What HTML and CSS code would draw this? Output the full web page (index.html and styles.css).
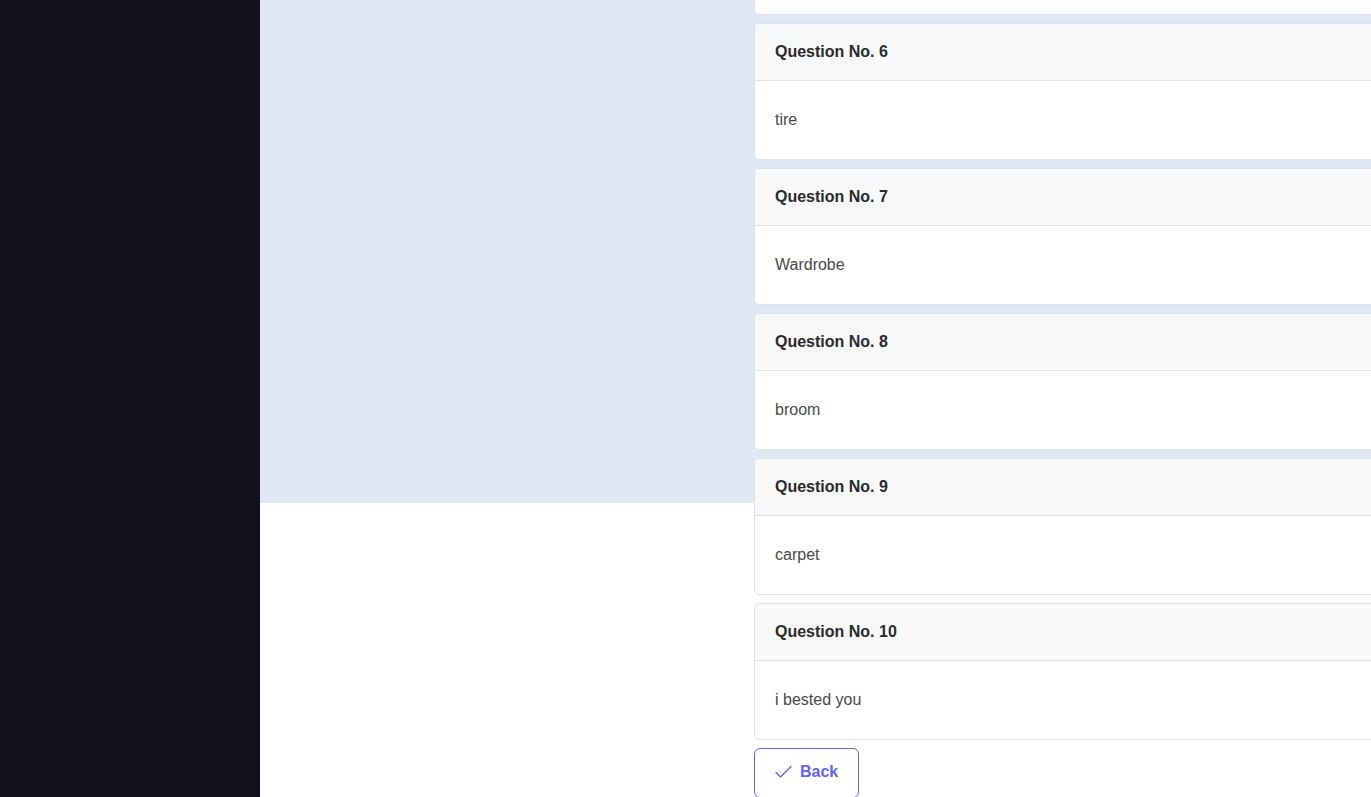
FILE: index.html
```html
<!DOCTYPE html>
<html lang="en">
<head>
<meta charset="utf-8">
<title>Answers</title>
<link rel="stylesheet" href="styles.css">
</head>
<body>
<div class="app">
  <aside class="sidebar"></aside>
  <main class="main">
    <div class="column">
      <div class="card-tail"></div>
      <div class="card">
        <div class="card-header">Question No. 6</div>
        <div class="card-body">tire</div>
      </div>
      <div class="card">
        <div class="card-header">Question No. 7</div>
        <div class="card-body">Wardrobe</div>
      </div>
      <div class="card">
        <div class="card-header">Question No. 8</div>
        <div class="card-body">broom</div>
      </div>
      <div class="card">
        <div class="card-header">Question No. 9</div>
        <div class="card-body">carpet</div>
      </div>
      <div class="card">
        <div class="card-header">Question No. 10</div>
        <div class="card-body">i bested you</div>
      </div>
      <button class="btn-back" type="button">
        <svg width="17" height="14" viewBox="0 0 17 14" fill="none" stroke="currentColor" stroke-width="1.4" stroke-linecap="round" stroke-linejoin="round"><path d="M1 7.5 L5.5 12 L16 1.5"/></svg>
        <span>Back</span>
      </button>
    </div>
  </main>
</div>
</body>
</html>
```
FILE: styles.css
```css
* { box-sizing: border-box; }
html, body { margin: 0; padding: 0; height: 100%; overflow: hidden; }
body {
  font-family: "Liberation Sans", Arial, sans-serif;
  font-size: 16px;
  line-height: 24px;
  color: #2b2b2b;
  background: #fff;
}
.app {
  display: flex;
  height: 797px;
}
.sidebar {
  flex: 0 0 260px;
  background: #11121d;
}
.main {
  flex: 1;
  background: linear-gradient(#e1e8f5 0, #e1e8f5 503px, #ffffff 503px);
  padding-left: 494px;
  overflow: hidden;
}
.column {
  width: 800px;
  display: flex;
  flex-direction: column;
  align-items: flex-start;
}
.card-tail {
  width: 100%;
  height: 15px;
  background: #fff;
  border: 1px solid #dee2e6;
  border-top: none;
  border-radius: 0 0 5px 5px;
  margin-bottom: 8px;
}
.card {
  width: 100%;
  background: #fff;
  border: 1px solid #dee2e6;
  border-radius: 5px;
  margin-bottom: 8px;
  overflow: hidden;
}
.card-header {
  background: #f7f8fa;
  border-bottom: 1px solid #dee2e6;
  padding: 16px 20px;
  font-weight: 700;
  color: #2b2b2b;
}
.card-body {
  padding: 27px 20px;
  color: #4a4a4a;
}
.btn-back {
  display: flex;
  align-items: center;
  gap: 8px;
  height: 50px;
  padding: 0 20px 2px 20px;
  border: 1px solid #6366f1;
  border-radius: 6px;
  background: #fff;
  color: #6366f1;
  font-family: "Liberation Sans", Arial, sans-serif;
  font-size: 16px;
  font-weight: 700;
  cursor: pointer;
}
```
